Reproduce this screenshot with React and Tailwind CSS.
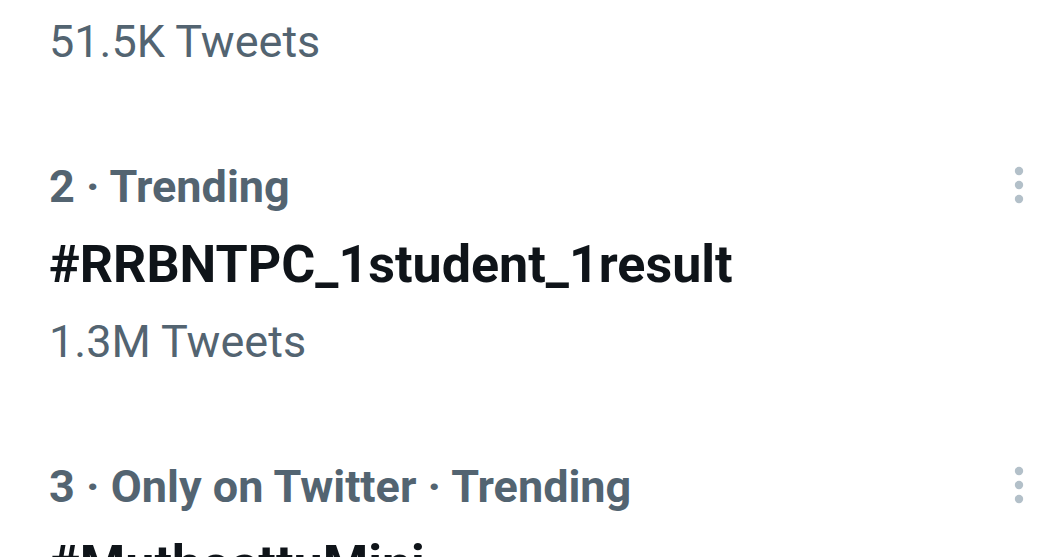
import React from 'react';

const trends = [
  { rank: 2, context: 'Trending', name: '#RRBNTPC_1student_1result', count: '1.3M Tweets' },
  { rank: 3, context: 'Only on Twitter · Trending', name: '#MuthoattuMini', count: '12.4K Tweets' },
];

const MoreIcon = () => (
  <svg width="10" height="38" viewBox="0 0 10 38" className="text-[#b3c0c9]" fill="currentColor">
    <circle cx="5" cy="5" r="4.2" />
    <circle cx="5" cy="19" r="4.2" />
    <circle cx="5" cy="33" r="4.2" />
  </svg>
);

const TrendRow = ({ trend }) => (
  <div className="relative pt-[46px] pb-[45px]">
    <div className="flex items-center justify-between">
      <div className="text-[45px] leading-[54px] font-bold text-[#536471] whitespace-nowrap">
        {trend.rank} · {trend.context}
      </div>
      <div className="pr-[34px] pb-[4px]">
        <MoreIcon />
      </div>
    </div>
    <div className="mt-[21px] text-[52px] leading-[60px] font-bold text-[#0f1419] whitespace-nowrap">
      {trend.name}
    </div>
    <div className="mt-[20px] text-[45px] leading-[54px] text-[#536471] whitespace-nowrap">
      {trend.count}
    </div>
  </div>
);

const App = () => {
  return (
    <div
      className="w-[1058px] h-[557px] overflow-hidden bg-white pl-[49px]"
      style={{ fontFamily: 'Roboto, "Noto Sans", sans-serif' }}
    >
      <div className="pt-[15px] pb-[45px]">
        <div className="text-[45px] leading-[54px] text-[#536471] whitespace-nowrap">51.5K Tweets</div>
      </div>
      {trends.map((t) => (
        <TrendRow key={t.rank} trend={t} />
      ))}
    </div>
  );
};

export default App;
